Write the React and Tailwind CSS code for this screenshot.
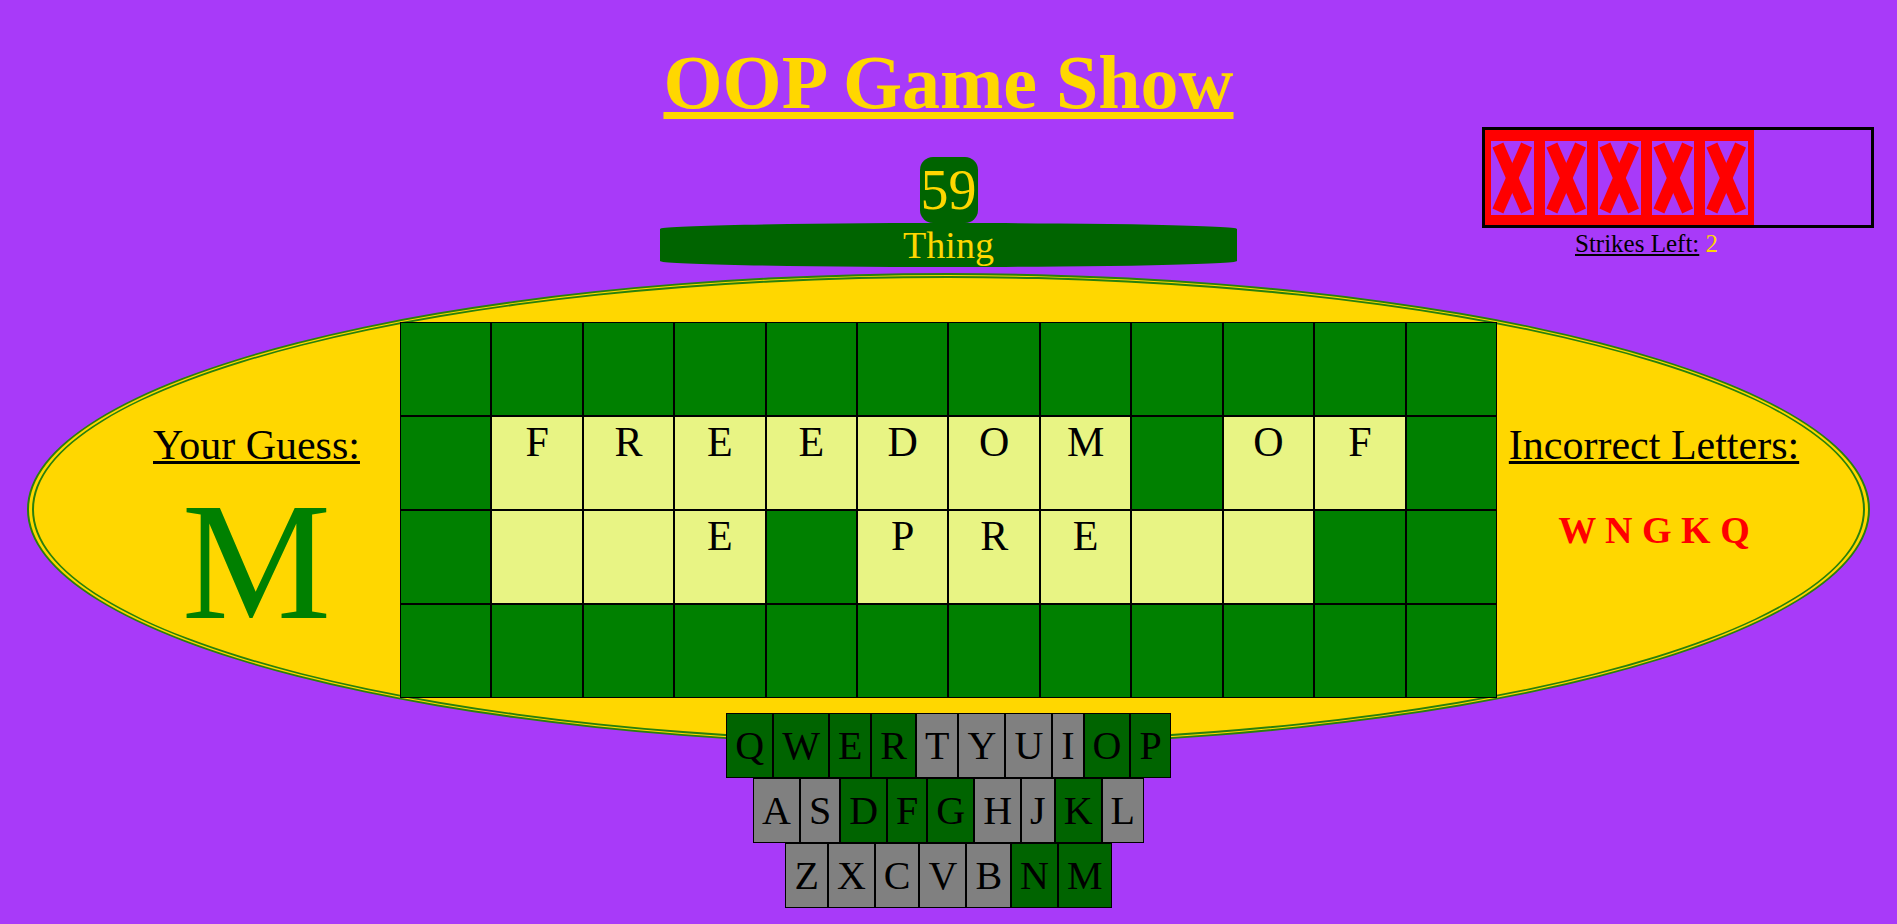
import React from 'react';

const BOARD = ['############', '#FREEDOM#OF#', '#  E#PRE  ##', '############'];
const KEY_ROWS = ['QWERTYUIOP', 'ASDFGHJKL', 'ZXCVBNM'];
const GUESSED = 'QWERODPFGKNM';
const MISSED = ['W', 'N', 'G', 'K', 'Q'];

const StrikeMark = () => (
  <div className="h-full w-[42.5px] bg-[#a83af9]">
    <svg viewBox="0 0 43 73" className="h-full w-full" preserveAspectRatio="none">
      <line x1="7" y1="4" x2="36" y2="69" stroke="#ff0000" strokeWidth="12" />
      <line x1="36" y1="4" x2="7" y2="69" stroke="#ff0000" strokeWidth="12" />
    </svg>
  </div>
);

const BoardCell = ({ ch }) => {
  if (ch === '#') return <div className="h-[94px] border border-black bg-[#008000]" />;
  return (
    <div className="h-[94px] border border-black bg-[#e8f484] text-center text-[42px] leading-[50px] text-black">
      {ch.trim()}
    </div>
  );
};

const Key = ({ letter }) => (
  <div
    className={`border border-black px-2 py-2 text-[40px] leading-[47px] text-black ${
      GUESSED.includes(letter) ? 'bg-[#006400]' : 'bg-[#808080]'
    }`}
  >
    {letter}
  </div>
);

export default function App() {
  return (
    <div className="min-h-screen bg-[#a83af9] pt-[25px] font-['Liberation_Serif',serif]">
      {/* header */}
      <div className="grid grid-cols-[1fr_577px_1fr]">
        <div />
        <div>
          <h1 className="text-center text-[76px] font-bold leading-normal text-[#ffd700] underline">OOP Game Show</h1>
          <div className="mx-auto mt-[18px] h-[66px] w-[58px] rounded-[13px] bg-[#006400] text-center text-[56px] leading-[66px] text-[#ffd700]">
            59
          </div>
          <div className="h-[44px] rounded-[50%_/_6px] bg-[#006400] text-center text-[38px] leading-[44px] text-[#ffd700]">
            Thing
          </div>
        </div>
        <div className="pl-[245px] pt-[102px]">
          <div className="h-[101px] w-[392px] border-[3px] border-black">
            <div className="flex h-full w-[269px] gap-[11px] bg-[#ff0000] px-[6px] py-[10.5px]">
              {[0, 1, 2, 3, 4].map(i => (
                <StrikeMark key={i} />
              ))}
            </div>
          </div>
          <div className="-mt-[3px] pl-[93px] text-[25px] leading-normal text-black">
            <span className="underline">Strikes Left:</span> <span className="text-[#ffd700]">2</span>
          </div>
        </div>
      </div>

      {/* board */}
      <div className="mx-[27px] mt-[6px] flex h-[473px] items-center justify-center rounded-[50%] border-x-[7px] border-y-[5px] border-double border-[#2a800c] bg-[#ffd700]">
        <div className="flex h-[376px] w-[314px] flex-col items-center pl-[27px] pt-[101px]">
          <div className="text-[42px] leading-[44px] text-black underline decoration-[3px]">Your Guess:</div>
          <div className="-mt-[32px] text-[168px] leading-normal text-[#008000]">M</div>
        </div>
        <div className="grid w-[1097px] grid-cols-12">
          {BOARD.map((row, r) =>
            row.split('').map((ch, c) => <BoardCell key={`${r}-${c}`} ch={ch} />)
          )}
        </div>
        <div className="flex h-[376px] w-[314px] flex-col items-center pt-[101px]">
          <div className="text-[42px] leading-[44px] text-black underline decoration-[3px]">Incorrect Letters:</div>
          <div className="mt-[35px] text-[38px] font-bold leading-normal text-[#ff0000]">{MISSED.join(' ')}</div>
        </div>
      </div>

      {/* keyboard */}
      <div className="relative -mt-[33px] flex flex-col items-center">
        {KEY_ROWS.map(row => (
          <div key={row} className="flex">
            {row.split('').map(l => (
              <Key key={l} letter={l} />
            ))}
          </div>
        ))}
      </div>
    </div>
  );
}
